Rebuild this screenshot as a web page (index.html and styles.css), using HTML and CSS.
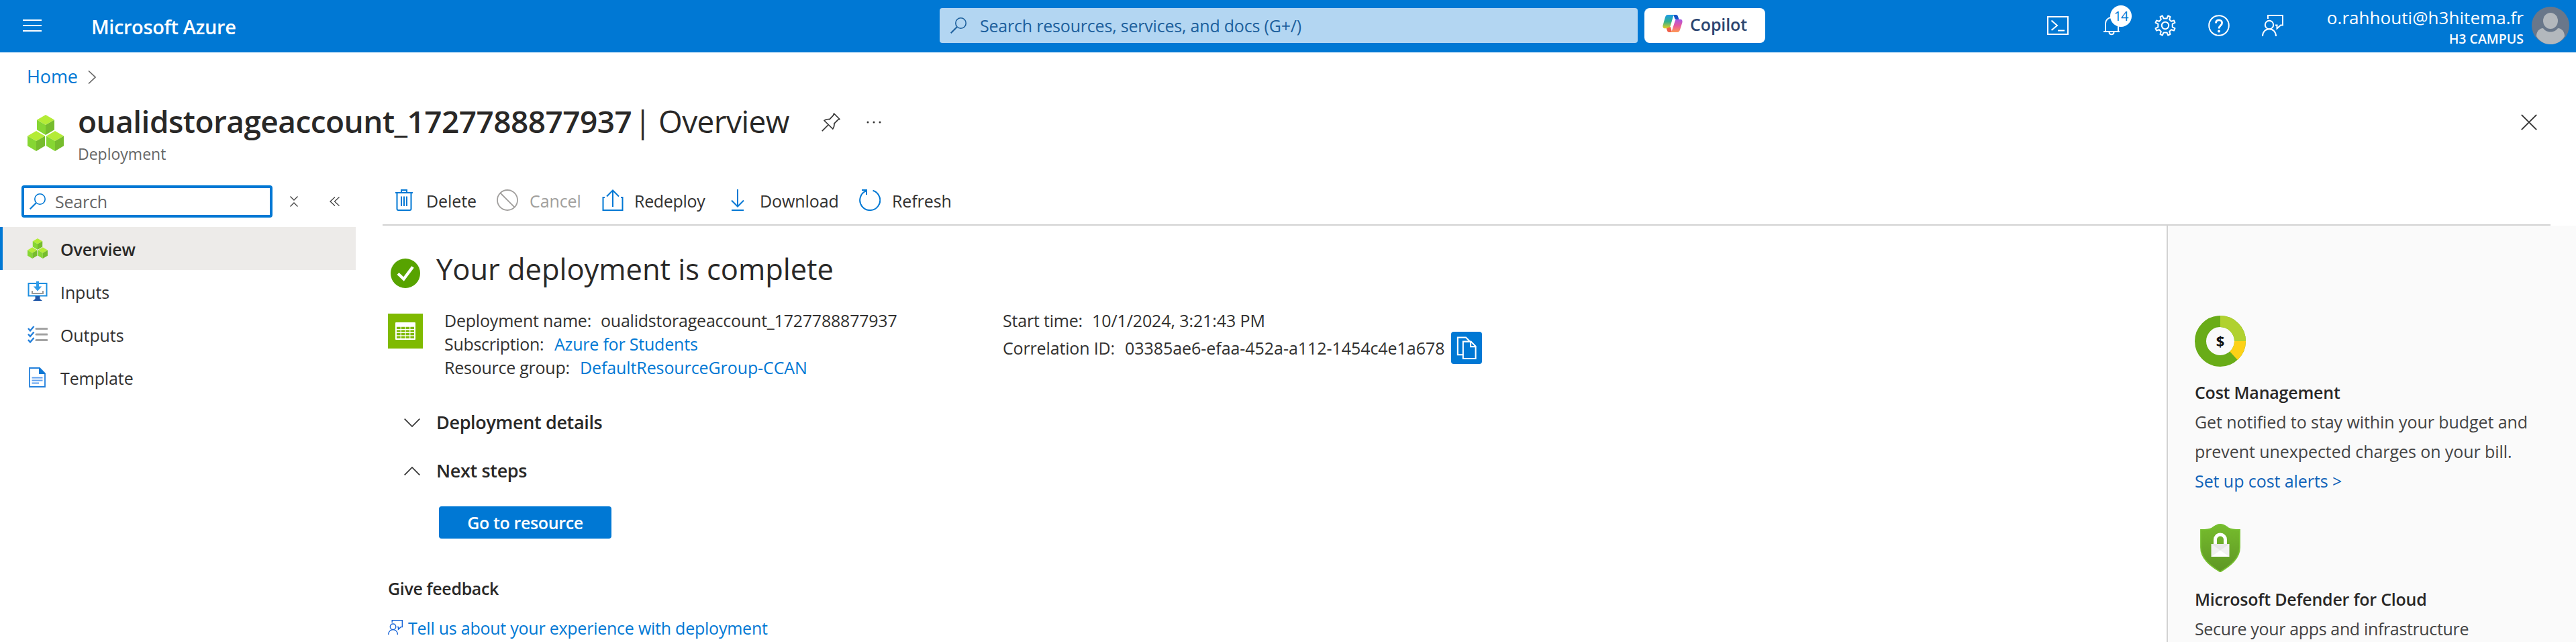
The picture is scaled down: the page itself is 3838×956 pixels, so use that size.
FILE: index.html
```html
<!DOCTYPE html>
<html lang="en">
<head>
<meta charset="utf-8">
<title>oualidstorageaccount_1727788877937 - Microsoft Azure</title>
<link rel="stylesheet" href="styles.css">
</head>
<body>
<svg class="defs" aria-hidden="true">
  <defs>
    <g id="cube">
      <path fill="#b4ec36" d="M13 0 26 7.5 13 15 0 7.5z"/>
      <path fill="#86d633" d="M0 7.5 13 15V30L0 22.3z"/>
      <path fill="#76bc2d" d="M26 7.5 13 15V30l13-7.7z"/>
    </g>
    <symbol id="cubes" viewBox="0 0 54 54">
      <use href="#cube" x="14"/><use href="#cube" y="24"/><use href="#cube" x="28" y="24"/>
    </symbol>
    <symbol id="magnifier" viewBox="0 0 24 24">
      <circle cx="15.5" cy="8.5" r="7.7" fill="none" stroke="currentColor" stroke-width="1.6"/>
      <path d="M10 14 .7 23.3" fill="none" stroke="currentColor" stroke-width="2"/>
    </symbol>
    <symbol id="feedback" viewBox="0 0 32 32">
      <g fill="none" stroke="currentColor" stroke-width="2">
        <circle cx="11" cy="15" r="6.2"/>
        <path d="M1 32c0-6.500 4.500-10.800 10-10.800S21 25.500 21 32M9 6V1H31v14.500h-3l-5.500 5v-5H20"/>
      </g>
    </symbol>
    <linearGradient id="shieldFill" x1="0" y1="0" x2="0" y2="1"><stop offset="0" stop-color="#76bc2d"/><stop offset="1" stop-color="#5e9624"/></linearGradient>
    <linearGradient id="copLeft" x1="0" y1="0" x2="0" y2="1"><stop offset="0" stop-color="#1f9be8"/><stop offset=".5" stop-color="#2eb08f"/><stop offset="1" stop-color="#e8cf22"/></linearGradient>
    <linearGradient id="copRight" x1="0" y1="0" x2="0" y2="1"><stop offset="0" stop-color="#a457e8"/><stop offset=".5" stop-color="#e8589c"/><stop offset="1" stop-color="#ff9a52"/></linearGradient>
  </defs>
</svg>

<header class="topbar">
  <svg class="menu-icon" viewBox="0 0 28 20"><path d="M0 2h28M0 10h28M0 18h28" stroke="#fff" stroke-width="2"/></svg>
  <a class="brand">Microsoft Azure</a>
  <div class="global-search">
    <svg class="icon-24"><use href="#magnifier"/></svg>
    <span>Search resources, services, and docs (G+/)</span>
  </div>
  <button class="copilot">
    <svg viewBox="0 0 30 28">
      <path fill="#1552c8" d="M16 1h4c2 0 2.600 1 3.200 3l1.300 4H19z"/>
      <path fill="url(#copLeft)" d="M8 1h11c-2 0-2.800 1.500-3.400 3.500l-4 13.500c-.7 2.200-1.800 3.300-4 3.300H3.500C.8 21.300 0 19 .6 16.500L4 4.500C4.800 2 6 1 8 1z"/>
      <path fill="#f0604a" d="M14 27h-4c-2 0-2.700-1-3.300-3l-.8-2.700L12 19z"/>
      <path fill="url(#copRight)" d="M22 27H11c2 0 2.800-1.500 3.400-3.500l4-12.500c.7-2.200 1.800-3.300 4-3.300h4.100c2.700 0 3.500 2.300 2.900 4.800L26 23.500C25.200 26 24 27 22 27z"/>
    </svg>
    <span>Copilot</span>
  </button>
  <nav class="top-icons">
    <svg class="icon-32" viewBox="0 0 32 32"><path d="M1 3h30v26H1zM6.500 8.500 15 16l-8.500 7M16 23.500h10" fill="none" stroke="#fff" stroke-width="2"/></svg>
    <span class="bell">
      <svg class="icon-32" viewBox="0 0 32 32"><path d="M7 25V13C7 8 11 4 16 4s10 4 10 9v12M4 25h24M12.500 25.500c0 2.500 1.500 3.800 3.500 3.800s3.500-1.300 3.500-3.800" fill="none" stroke="#fff" stroke-width="2"/></svg>
      <span class="badge">14</span>
    </span>
    <svg class="icon-32" viewBox="0 0 32 32"><g fill="none" stroke="#fff" stroke-width="2"><circle cx="16" cy="16" r="5.200"/><path stroke-linejoin="round" d="m13.500 5.500-1.700-4L8.500 3l1.300 4L7 9.800 3 8.500l-1.500 3.300 3.800 1.900v4.600l-3.800 1.900L3 23.500l4-1.300L9.800 25l-1.300 4 3.300 1.500 1.700-4h5l1.700 4 3.300-1.500-1.300-4 2.800-2.800 4 1.300 1.500-3.300-3.800-1.900v-4.600l3.800-1.900L29 8.500l-4 1.300L22.200 7l1.300-4-3.300-1.500-1.700 4z"/></g></svg>
    <svg class="icon-32" viewBox="0 0 32 32"><g fill="none" stroke="#fff"><circle cx="16" cy="16" r="14.800" stroke-width="2"/><path stroke-width="2.800" d="M11.500 12.500c0-3 2-4.600 4.600-4.600s4.500 1.700 4.500 4.200c0 4-4.500 4-4.500 8.400"/></g><circle cx="16" cy="24.500" r="1.900" fill="#fff"/></svg>
    <svg class="icon-32"><use href="#feedback"/></svg>
  </nav>
  <div class="account">
    <span class="email">o.rahhouti@h3hitema.fr</span>
    <span class="tenant">H3 CAMPUS</span>
  </div>
  <svg class="avatar" viewBox="0 0 56 56">
    <circle cx="28" cy="28" r="28" fill="#69778a"/>
    <path fill="#b3b8bd" d="M7 44c0-7 4-11.500 10-12 3 4 6.500 5.500 11 5.500S36 36 39 32c6 .5 10 5 10 12-4.500 7.500-12 12-21 12S11.500 51.500 7 44z"/>
    <ellipse cx="28" cy="21" rx="11" ry="12" fill="#b3b8bd"/>
  </svg>
</header>

<nav class="breadcrumb">
  <a>Home</a>
  <svg viewBox="0 0 12 20"><path d="m1 .5 10 9.500L1 19.500" fill="none" stroke="#666" stroke-width="1.600"/></svg>
</nav>

<div class="page-head">
  <svg class="page-icon"><use href="#cubes"/></svg>
  <div class="page-title">
    <h1><b>oualidstorageaccount_1727788877937</b><span class="page-section">| Overview</span></h1>
    <p>Deployment</p>
  </div>
  <svg class="pin" viewBox="0 0 28 28"><path d="M18.500 1 27 9.500l-2.200.7-6 6c.5 2.800 0 5-2 7.800L4 11.500c2.800-2 5-2.400 8-1.800l5.700-6zM10.500 17.500.8 27.200" fill="none" stroke="#333" stroke-width="1.700" stroke-linejoin="round"/></svg>
  <svg class="dots" viewBox="0 0 22 4"><circle cx="2" cy="2" r="1.500"/><circle cx="11" cy="2" r="1.500"/><circle cx="20" cy="2" r="1.500"/></svg>
  <svg class="close" viewBox="0 0 24 24"><path d="m.8.8 22.400 22.400m0-22.400L.8 23.200" stroke="#333" stroke-width="1.900"/></svg>
</div>

<div class="workspace">
  <aside class="sidebar">
    <div class="side-tools">
      <div class="side-search"><svg class="icon-24"><use href="#magnifier"/></svg><span>Search</span></div>
      <svg class="collapse-v" viewBox="0 0 12 16"><path d="m.5.500 5.500 5.500L11.500.5M.5 15.500 6 10l5.500 5.500" fill="none" stroke="#444" stroke-width="1.300"/></svg>
      <svg class="collapse-h" viewBox="0 0 15 14"><path d="M8 .5 1 7l7 6.500M14.500.5 7.500 7l7 6.500" fill="none" stroke="#444" stroke-width="1.300"/></svg>
    </div>
    <ul class="side-menu">
      <li class="active"><svg><use href="#cubes"/></svg><span>Overview</span></li>
      <li><svg viewBox="0 0 30 30"><path d="M1.500 3h27v18.500h-27z" fill="#fff" stroke="#1f8fe0" stroke-width="2"/><path d="M11.500 22h7v4l3.500 3H8l3.500-3z" fill="#2258a8"/><path d="M7 14v4h16v-4" fill="none" stroke="#999" stroke-width="2"/><path d="M13 0h4v7.500h4.200L15 14.500 8.800 7.500H13z" fill="#2f9be8"/></svg><span>Inputs</span></li>
      <li><svg viewBox="0 0 30 30"><path d="M13 6.500h16M13 15h16M13 23.500h16" stroke="#a3a3a3" stroke-width="3.200" stroke-linecap="round"/><path d="m1 6 3 3.500L9.500 3M1 14.500 4 18l5.500-6.500M1 23l3 3.500L9.500 20" fill="none" stroke="#2380dc" stroke-width="2.400"/></svg><span>Outputs</span></li>
      <li><svg viewBox="0 0 30 30"><path d="M3 1h15l8 8v20H3z" fill="#fff" stroke="#2380dc" stroke-width="1.800"/><path d="M17 0 27 10H17z" fill="#0f78d4"/><path d="M6.500 15.500h16M6.500 19.500h16M6.500 23.500H17" stroke="#5ea0ef" stroke-width="2"/></svg><span>Template</span></li>
    </ul>
  </aside>

  <main class="blade">
    <div class="toolbar">
      <button class="cmd-delete"><svg class="icon-32" viewBox="0 0 32 32"><path d="M3 5h26M12 4.500V1h8v3.500M5.500 5v24c0 1.300.7 2 2 2h17c1.300 0 2-.7 2-2V5M12 10.500V25M16 10.500V25M20 10.500V25" fill="none" stroke="#0078d4" stroke-width="2"/></svg><span>Delete</span></button>
      <button class="cmd-cancel"><svg class="icon-32" viewBox="0 0 32 32"><path d="M16 1a15 15 0 1 1 0 30 15 15 0 0 1 0-30M5.500 5.500l21 21" fill="none" stroke="#a19f9d" stroke-width="1.800"/></svg><span>Cancel</span></button>
      <button class="cmd-redeploy"><svg class="icon-32" viewBox="0 0 32 32"><path d="M4 12H1.500v19h29V12H28M16 26V1.500M7 10.500l9-9 9 9" fill="none" stroke="#0078d4" stroke-width="2"/></svg><span>Redeploy</span></button>
      <button class="cmd-download"><svg class="icon-32" viewBox="0 0 32 32"><path d="M16 0v25.500M7 16.500l9 9 9-9M7 31h18" fill="none" stroke="#0078d4" stroke-width="2"/></svg><span>Download</span></button>
      <button class="cmd-refresh"><svg class="icon-32" viewBox="0 0 32 32"><path d="M11 2A15 15 0 1 0 20.500 1.700M4 1h7v7" fill="none" stroke="#0078d4" stroke-width="2"/></svg><span>Refresh</span></button>
    </div>

    <div class="blade-body">
      <section class="deployment">
        <div class="status">
          <svg viewBox="0 0 44 44"><circle cx="22" cy="22" r="22" fill="#57a300"/><path d="m11 22.500 8.500 8L33 12.500" fill="none" stroke="#fff" stroke-width="4.400"/></svg>
          <h2>Your deployment is complete</h2>
        </div>

        <div class="details">
          <svg class="tile" viewBox="0 0 52 52"><path fill="#7fba00" d="M0 0h52v52H0z"/><path fill="#fff" d="M12 13h28a1 1 0 0 1 1 1v24a1 1 0 0 1-1 1H12a1 1 0 0 1-1-1V14a1 1 0 0 1 1-1z"/><path d="M13 21.300h26M13 26h26M13 30.700h26M13 35.200h26" stroke="#7fba00" stroke-width="3.200" stroke-dasharray="5.600 1.200"/></svg>
          <dl>
            <div><dt class="k-name">Deployment name:</dt><dd class="v-name">oualidstorageaccount_1727788877937</dd></div>
            <div><dt class="k-sub">Subscription:</dt><dd class="link v-sub">Azure for Students</dd></div>
            <div><dt class="k-group">Resource group:</dt><dd class="link">DefaultResourceGroup-CCAN</dd></div>
          </dl>
          <dl>
            <div><dt class="k-start">Start time:</dt><dd>10/1/2024, 3:21:43 PM</dd></div>
            <div class="correlation"><dt class="k-corr">Correlation ID:</dt><dd class="v-corr">03385ae6-efaa-452a-a112-1454c4e1a678</dd>
              <button class="copy"><svg viewBox="0 0 32 36"><g fill="#0078d4" stroke="#fff" stroke-width="2.200"><path d="M10 29H2V1.500h13l5 5V10"/><path d="M10.500 8H23l7.500 7.500V35h-20zM22.500 8v8h8"/></g></svg></button>
            </div>
          </dl>
        </div>

        <div class="accordion"><svg viewBox="0 0 24 13"><path d="M.7.7 12 12 23.300.7" fill="none" stroke="#333" stroke-width="1.700"/></svg><h3>Deployment details</h3></div>
        <div class="accordion"><svg viewBox="0 0 24 13"><path d="M.7 12.300 12 1l11.300 11.300" fill="none" stroke="#333" stroke-width="1.700"/></svg><h3>Next steps</h3></div>
        <button class="primary"><span>Go to resource</span></button>

        <h4 class="feedback-title">Give feedback</h4>
        <a class="feedback-link"><svg><use href="#feedback"/></svg><span>Tell us about your experience with deployment</span></a>
      </section>

      <aside class="promos">
        <article>
          <svg class="donut" viewBox="0 0 76 76">
            <g fill="none" stroke-width="17">
              <circle cx="38" cy="38" r="29.500" stroke="#69ac18"/>
              <path d="M38 8.500A29.500 29.500 0 0 1 67.500 38" stroke="#b0d12f"/>
              <path d="M67.500 38a29.500 29.500 0 0 1-9.500 21.700" stroke="#fdd116"/>
            </g>
            <text x="38" y="46" text-anchor="middle">$</text>
          </svg>
          <h3>Cost Management</h3>
          <p>Get notified to stay within your budget and</p>
          <p>prevent unexpected charges on your bill.</p>
          <a>Set up cost alerts &gt;</a>
        </article>
        <article>
          <svg class="shield" viewBox="0 0 60 72">
            <path d="M30 1c6 0 8.500 3 12 5.200C46 8.500 51 9 59 9v26c0 16-13 27-29 36.500C14 62 1 51 1 35V9c8 0 13-.5 17-2.800C21.500 4 24 1 30 1z" fill="url(#shieldFill)" stroke="#76bf30" stroke-width="1.800"/>
            <path d="M22.500 31v-7.500a7.500 7.500 0 0 1 15 0V31" fill="none" stroke="#fff" stroke-width="5"/>
            <path d="M16.500 30h27v19h-27z" fill="#f1f1f1"/><path d="m16.500 49 13.500-9.500L43.500 49z" fill="#fff"/><path d="M16.500 30h27L30 39.500z" fill="#e6e6e6"/>
          </svg>
          <h3>Microsoft Defender for Cloud</h3>
          <p class="t-secure">Secure your apps and infrastructure</p>
        </article>
      </aside>
    </div>
  </main>
</div>
</body>
</html>
```

FILE: styles.css
```css
* { box-sizing: border-box; margin: 0; padding: 0; }

body {
  width: 3838px;
  height: 956px;
  overflow: hidden;
  background: #fff;
  color: #323130;
  font: 400 25px/36px "Open Sans", "Noto Sans", sans-serif;
  letter-spacing: -0.1px;
  white-space: nowrap;
}

button { border: 0; background: none; font: inherit; color: inherit; letter-spacing: inherit; white-space: nowrap; }
ul { list-style: none; }
svg { display: block; flex: none; }
a, .link { color: #0078d4; }
.defs { width: 0; height: 0; }
.icon-24 { width: 24px; height: 24px; }
.icon-32 { width: 32px; height: 32px; }

/* Top bar */
.topbar { display: flex; height: 78px; background: #0078d4; color: #fff; }
.menu-icon { width: 28px; height: 20px; margin: 28px 0 0 34px; }
.brand { width: 1264px; margin-left: 74px; color: #fff; font-size: 29px; font-weight: 600; line-height: 80px; letter-spacing: -0.4px; }
.global-search { display: flex; align-items: center; gap: 20px; width: 1040px; height: 52px; margin-top: 12px; padding-left: 16px; border-radius: 4px; background: #b3d6f2; color: #1c5f9c; letter-spacing: -0.2px; }
.copilot { display: flex; align-items: center; gap: 11px; width: 180px; height: 52px; margin: 12px 0 0 10px; padding-left: 27px; border-radius: 8px; background: #fff; color: #2c4570; font-weight: 600; }
.copilot svg { width: 30px; height: 28px; margin-top: -6px; }
.copilot span { margin-top: -4px; }
.top-icons { display: flex; gap: 48px; margin: 22px 0 0 420px; width: 356px; }
.bell { position: relative; }
.badge { position: absolute; left: 14px; top: -14px; width: 32px; height: 32px; border-radius: 50%; background: #fff; color: #0078d4; font-size: 20px; line-height: 31px; text-align: center; letter-spacing: -1px; }
.account { width: 354px; display: flex; flex-direction: column; align-items: flex-end; }
.email { margin-top: 8px; font-size: 26px; line-height: 36px; letter-spacing: 0.05px; }
.tenant { font-size: 19.5px; font-weight: 600; line-height: 27px; letter-spacing: 0; }
.avatar { width: 56px; height: 56px; margin: 10px 0 0 12px; }

/* Heading */
.breadcrumb { display: flex; align-items: center; height: 70px; padding-left: 40px; font-size: 27px; }
.breadcrumb a { width: 91px; margin-top: 2px; }
.breadcrumb svg { width: 12px; height: 20px; margin-top: 4px; }
.page-head { display: flex; height: 112px; padding-left: 41px; }
.page-icon { width: 54px; height: 54px; margin-top: 23px; }
.page-title { width: 1108px; margin-left: 21px; }
.page-title h1 { display: flex; font-size: 46px; line-height: 64px; font-weight: 400; color: #292827; letter-spacing: -0.55px; }
.page-title b { width: 829px; font-weight: 600; }
.page-title .page-section { letter-spacing: -0.6px; }
.page-title p { font-size: 23px; line-height: 34px; color: #666; letter-spacing: 0; }
.pin { width: 28px; height: 28px; margin-top: 20px; }
.dots { width: 22px; height: 4px; margin: 32px 0 0 39px; fill: #333; }
.close { width: 24px; height: 24px; margin: 22px 58px 0 auto; }

/* Sidebar */
.workspace { display: grid; grid-template-columns: 570px 1fr; height: 696px; }
.sidebar { padding-top: 16px; }
.side-tools { display: flex; align-items: center; height: 48px; padding-left: 32px; }
.side-search { display: flex; align-items: center; gap: 14px; width: 374px; height: 48px; padding-left: 8px; border: 4px solid #0078d4; border-radius: 4px; color: #666; letter-spacing: -0.2px; }
.side-search svg { color: #0078d4; }
.collapse-v { width: 12px; height: 16px; margin-left: 26px; }
.collapse-h { width: 15px; height: 14px; margin-left: 47px; }
.side-menu { margin-top: 14px; width: 530px; }
.side-menu li { display: flex; align-items: center; gap: 19px; height: 64px; padding-left: 41px; }
.side-menu svg { width: 30px; height: 30px; }
.side-menu span { margin-top: 2px; }
.side-menu .active { padding-left: 37px; border-left: 4px solid #0078d4; background: #edebe9; color: #292827; font-weight: 600; letter-spacing: -0.2px; }

/* Command bar */
.blade { display: grid; grid-template-rows: 76px 1fr; min-height: 0; }
.toolbar { display: flex; align-items: center; width: 3230px; padding-left: 16px; border-bottom: 2px solid #d2d2d2; }
.toolbar button { display: flex; align-items: center; gap: 17px; text-align: left; }
.toolbar svg { margin-top: 1px; }
.toolbar span { margin-top: 3px; }
.cmd-delete { width: 154px; }
.cmd-cancel { width: 157px; color: #a19f9d; }
.toolbar .cmd-redeploy { width: 186px; gap: 16px; letter-spacing: -0.3px; }
.cmd-download { width: 197px; }
.cmd-refresh { width: 150px; }

/* Deployment */
.blade-body { display: grid; grid-template-columns: 1fr 610px; min-height: 0; }
.deployment { padding: 34px 0 0 8px; }
.status { display: flex; height: 62px; padding-left: 4px; }
.status svg { width: 44px; height: 44px; margin: 15px 24px 0 0; }
.status h2 { font-size: 43.5px; line-height: 62px; font-weight: 400; color: #292827; letter-spacing: -0.05px; }
.details { display: grid; grid-template-columns: 84px 832px auto; justify-content: start; height: 105px; margin-top: 28px; }
.tile { width: 52px; height: 52px; margin-top: 7px; }
.details dl > div { display: flex; height: 35px; line-height: 35px; }
.k-name { width: 233px; letter-spacing: -0.2px; }
.k-sub { width: 164px; letter-spacing: -0.3px; }
.k-group { width: 202px; letter-spacing: -0.25px; }
.k-start { width: 133px; letter-spacing: -0.2px; }
.k-corr { width: 182px; letter-spacing: -0.15px; }
.v-name { letter-spacing: -0.22px; }
.v-sub { letter-spacing: -0.2px; }
.v-corr { width: 486px; letter-spacing: -0.05px; }
.details .correlation { height: 48px; margin-top: -1px; line-height: 48px; }
.copy { display: grid; place-items: center; width: 46px; height: 48px; border-radius: 4px; background: #0078d4; }
.copy svg { width: 30px; height: 34px; }
.accordion { display: flex; align-items: center; gap: 24px; height: 72px; padding-left: 24px; }
.details + .accordion { margin-top: 27px; }
.accordion svg { width: 24px; height: 13px; margin-top: 3px; }
.accordion h3 { margin-top: 2px; font-size: 27px; font-weight: 600; color: #292827; letter-spacing: -0.35px; }
.primary { display: block; width: 257px; height: 48px; margin: 18px 0 0 76px; border-radius: 4px; background: #0078d4; color: #fff; font-weight: 600; line-height: 44px; letter-spacing: -0.35px; }
.feedback-title { margin-top: 56px; font-size: 25px; font-weight: 600; color: #292827; letter-spacing: -0.35px; }
.feedback-link { display: flex; gap: 8px; margin-top: 23px; letter-spacing: -0.24px; }
.feedback-link svg { width: 22px; height: 22px; margin-top: 6px; color: #1562d6; }

/* Promo column */
.promos { padding: 134px 0 0 40px; border-left: 2px solid #d2d2d2; background: #fafafa; line-height: 44px; overflow: hidden; color: #444; letter-spacing: -0.07px; }
.promos h3 { font-size: 25px; font-weight: 600; color: #292827; letter-spacing: -0.22px; }
.promos a { display: block; color: #0f62b8; }
.donut { width: 76px; height: 76px; margin-bottom: 16px; }
.donut text { font-size: 22px; font-weight: 700; fill: #111; }
.shield { width: 60px; height: 72px; margin: 42px 0 18px 8px; }
.promos .t-secure { letter-spacing: -0.35px; }
```
